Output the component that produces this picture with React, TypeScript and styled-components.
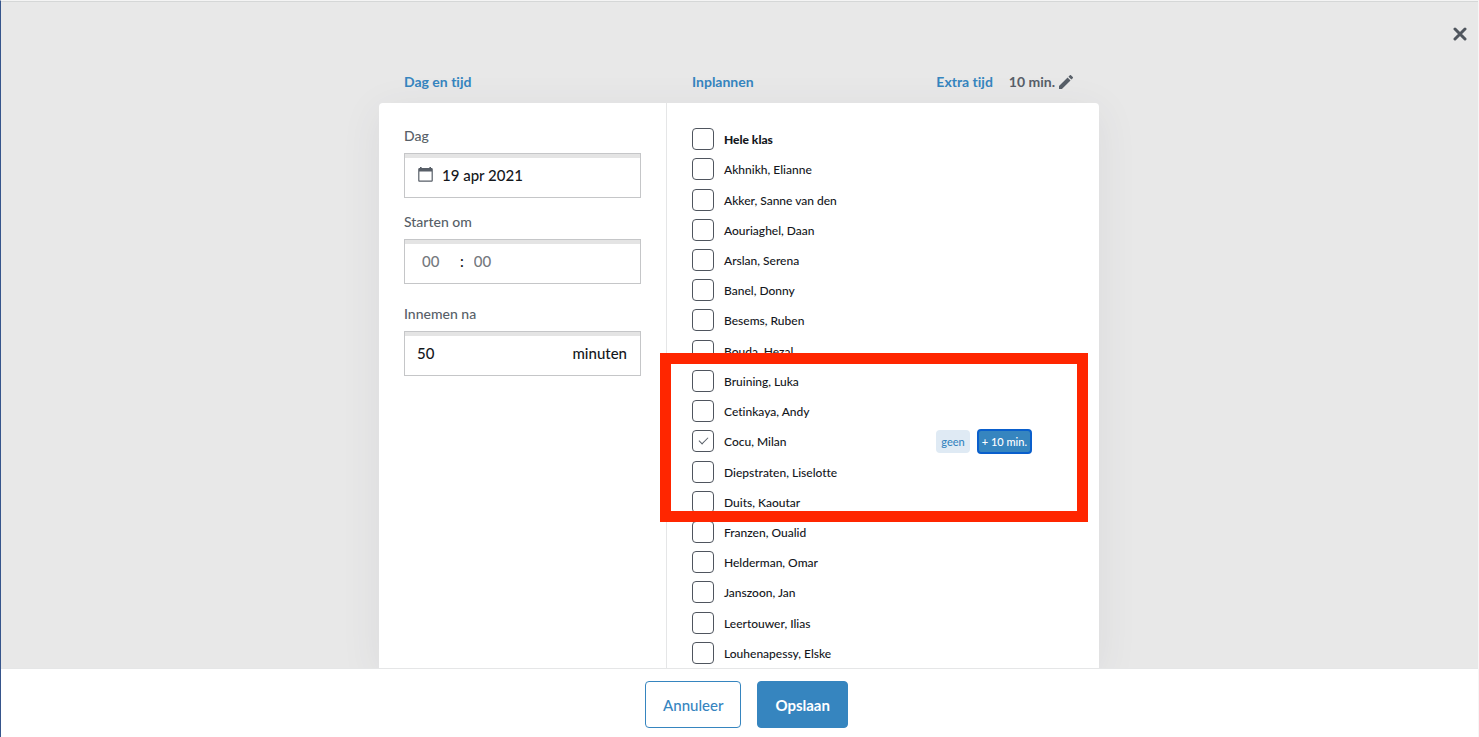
import React, { useState } from "react";
import styled, { createGlobalStyle, css } from "styled-components";

const color = {
  blue: "#3685bf",
  blueSoft: "#dfeaf4",
  focus: "#0a5fcc",
  text: "#14171c",
  label: "#585f68",
  border: "#c5c6c8",
  line: "#e5e6e7",
  backdrop: "#e8e8e8",
};

const GlobalStyle = createGlobalStyle`
  *, *::before, *::after { box-sizing: border-box; }
  body {
    margin: 0;
    font-family: Lato, "Liberation Sans", sans-serif;
    font-size: 14px;
    font-weight: 500;
    font-variant-ligatures: none;
    color: ${color.text};
    background: #fff;
  }
  input, button { font: inherit; color: inherit; font-variant-ligatures: none; }
`;

const Page = styled.div`
  display: flex;
  flex-direction: column;
  height: 100vh;
  min-height: 560px;
  border-left: 1px solid #36558c;
  border-right: 1px solid #f6f6f6;
  border-top: 1px solid #f4f4f4;
`;

const Stage = styled.main`
  position: relative;
  flex: 1;
  min-height: 0;
  display: flex;
  flex-direction: column;
  align-items: center;
  overflow: hidden;
  padding: 60px 17px 0 16px;
  background: ${color.backdrop};
  border-top: 1px solid #d5d7d7;
`;

const CloseButton = styled.button`
  position: absolute;
  top: 20px;
  right: 6px;
  display: grid;
  place-items: center;
  width: 24px;
  height: 24px;
  padding: 0;
  border: 0;
  background: none;
  color: #50565e;
  cursor: pointer;
`;

const columns = css`
  display: grid;
  grid-template-columns: minmax(0, 2fr) minmax(0, 3fr);
  width: 100%;
  max-width: 720px;
`;

const Headings = styled.header`
  ${columns}
  height: 41px;
  padding-bottom: 2px;
`;

const HeadingCell = styled.div`
  display: flex;
  align-items: center;
  padding: 0 26px 0 25px;
`;

const Heading = styled.h2<{ $grow?: boolean }>`
  margin: 0;
  flex: ${(p) => (p.$grow ? "1" : "none")};
  font-size: 14px;
  line-height: 20px;
  font-weight: 700;
  color: ${color.blue};
`;

const ExtraButton = styled.button`
  display: flex;
  align-items: center;
  gap: 4px;
  margin-left: 16px;
  padding: 0;
  border: 0;
  background: none;
  font-size: 14px;
  line-height: 20px;
  font-weight: 700;
  color: ${color.label};
  cursor: pointer;
`;

const Card = styled.section`
  ${columns}
  position: relative;
  flex: 1;
  min-height: 0;
  background: #fff;
  border-radius: 4px 4px 0 0;
  box-shadow: 0 8px 40px rgba(60, 60, 90, 0.08);
`;

const Fields = styled.div`
  display: flex;
  flex-direction: column;
  padding: 23px 25px;
  border-right: 1px solid ${color.line};
`;

const Field = styled.div<{ $roomy?: boolean }>`
  display: flex;
  flex-direction: column;
  gap: 7px;
  margin-bottom: ${(p) => (p.$roomy ? 20 : 14)}px;
`;

const Label = styled.label`
  font-size: 14px;
  line-height: 20px;
  color: ${color.label};
`;

const Control = styled.div`
  display: flex;
  align-items: center;
  height: 45px;
  padding: 0 13px 2px 12px;
  border: 1px solid ${color.border};
  box-shadow: inset 0 4px 0 #e4e4e4;
  font-size: 15px;
  line-height: 20px;
`;

const TextInput = styled.input<{ $width?: number }>`
  flex: ${(p) => (p.$width ? "none" : "1")};
  width: ${(p) => (p.$width ? `${p.$width}px` : "auto")};
  min-width: 0;
  padding: 0;
  border: 0;
  outline: 0;
  background: none;
  line-height: 20px;
  &::placeholder { color: #75797e; opacity: 1; }
`;

const CalendarIcon = styled.svg`
  flex: none;
  margin-right: 8px;
  color: ${color.label};
`;

const TimeRow = styled.div`
  display: flex;
  gap: 10px;
  padding-left: 5px;
`;

const Pupils = styled.ul`
  display: grid;
  grid-auto-rows: minmax(30px, 1fr);
  min-height: 0;
  margin: 0;
  padding: 21px 67px 0 25px;
  list-style: none;
`;

const Pupil = styled.li`
  display: flex;
  align-items: center;
  justify-content: space-between;
`;

const PupilLabel = styled.label<{ $strong?: boolean }>`
  display: flex;
  align-items: center;
  gap: 10px;
  font-size: 12px;
  line-height: 18px;
  font-weight: ${(p) => (p.$strong ? 900 : 500)};
  cursor: pointer;
`;

const PupilName = styled.span`
  padding-top: 2px;
`;

const Box = styled.input`
  appearance: none;
  display: grid;
  place-items: center;
  width: 22px;
  height: 22px;
  margin: 0;
  border: 1px solid #4f555e;
  border-radius: 4px;
  background: #fff;
  &:checked::after {
    content: "";
    width: 9px;
    height: 5px;
    margin-bottom: 4px;
    border: solid ${color.label};
    border-width: 0 0 1px 1px;
    transform: rotate(-45deg);
  }
`;

const Chips = styled.div`
  display: flex;
  align-items: center;
  gap: 7px;
`;

const Chip = styled.button<{ $active?: boolean }>`
  height: ${(p) => (p.$active ? 25 : 23)}px;
  padding: 1px ${(p) => (p.$active ? 3 : 5)}px 0;
  border: ${(p) => (p.$active ? `2px solid ${color.focus}` : "0")};
  border-radius: 4px;
  background: ${(p) => (p.$active ? color.blue : color.blueSoft)};
  color: ${(p) => (p.$active ? "#fff" : color.blue)};
  font-size: 11px;
  white-space: nowrap;
  cursor: pointer;
`;

const Highlight = styled.div`
  position: absolute;
  top: 250px;
  left: 281px;
  width: 428px;
  height: 169px;
  border: 11px solid #ff2600;
  pointer-events: none;
`;

const Footer = styled.footer`
  display: flex;
  justify-content: center;
  gap: 16px;
  padding: 12px 0 9px 14px;
  background: #fff;
  border-top: 1px solid ${color.line};
`;

const ActionButton = styled.button<{ $primary?: boolean }>`
  height: 47px;
  padding: 0 17px;
  border: 1px solid ${color.blue};
  border-radius: 4px;
  background: ${(p) => (p.$primary ? color.blue : "#fff")};
  color: ${(p) => (p.$primary ? "#fff" : color.blue)};
  font-size: 15px;
  font-weight: ${(p) => (p.$primary ? 700 : 500)};
  cursor: pointer;
`;

const pupils = [
  "Hele klas",
  "Akhnikh, Elianne",
  "Akker, Sanne van den",
  "Aouriaghel, Daan",
  "Arslan, Serena",
  "Banel, Donny",
  "Besems, Ruben",
  "Bouda, Hezal",
  "Bruining, Luka",
  "Cetinkaya, Andy",
  "Cocu, Milan",
  "Diepstraten, Liselotte",
  "Duits, Kaoutar",
  "Franzen, Oualid",
  "Helderman, Omar",
  "Janszoon, Jan",
  "Leertouwer, Ilias",
  "Louhenapessy, Elske",
];

export default function App() {
  const [selected, setSelected] = useState<string[]>(["Cocu, Milan"]);
  const toggle = (name: string) =>
    setSelected((now) =>
      now.includes(name) ? now.filter((n) => n !== name) : [...now, name]
    );

  return (
    <Page>
      <GlobalStyle />
      <Stage>
        <CloseButton aria-label="Sluiten">
          <svg width="14" height="14" viewBox="0 0 14 14" fill="none" stroke="currentColor" strokeWidth="3" strokeLinecap="round">
            <path d="M2 2l10 10M12 2L2 12" />
          </svg>
        </CloseButton>
        <Headings>
          <HeadingCell>
            <Heading>Dag en tijd</Heading>
          </HeadingCell>
          <HeadingCell>
            <Heading $grow>Inplannen</Heading>
            <Heading>Extra tijd</Heading>
            <ExtraButton>
              10 min.
              <svg width="14" height="14" viewBox="3 3 18 18" fill="currentColor" aria-hidden="true">
                <path d="M3 17.25V21h3.75L17.81 9.94l-3.75-3.75L3 17.25zM20.71 7.04a1 1 0 0 0 0-1.41l-2.34-2.34a1 1 0 0 0-1.41 0l-1.83 1.83 3.75 3.75 1.83-1.83z" />
              </svg>
            </ExtraButton>
          </HeadingCell>
        </Headings>
        <Card>
          <Fields>
            <Field>
              <Label htmlFor="day">Dag</Label>
              <Control>
                <CalendarIcon width="17" height="17" viewBox="0 0 17 17" aria-hidden="true">
                  <path
                    fill="currentColor"
                    fillRule="evenodd"
                    d="M3 1h1.6v1h7.8V1H14v1h.5c.8 0 1.3.6 1.3 1.300v11.200c0 .8-.6 1.300-1.300 1.300h-12c-.8 0-1.300-.6-1.300-1.300V3.300C1.200 2.600 1.700 2 2.500 2H3zM2.400 5.600v9h12.200v-9z"
                  />
                </CalendarIcon>
                <TextInput id="day" defaultValue="19 apr 2021" />
              </Control>
            </Field>
            <Field $roomy>
              <Label htmlFor="hour">Starten om</Label>
              <Control>
                <TimeRow>
                  <TextInput id="hour" $width={28} placeholder="00" />
                  <span>:</span>
                  <TextInput $width={28} placeholder="00" aria-label="Minuten" />
                </TimeRow>
              </Control>
            </Field>
            <Field>
              <Label htmlFor="duration">Innemen na</Label>
              <Control>
                <TextInput id="duration" defaultValue="50" />
                <span>minuten</span>
              </Control>
            </Field>
          </Fields>
          <Pupils>
            {pupils.map((name, i) => (
              <Pupil key={name}>
                <PupilLabel $strong={i === 0}>
                  <Box
                    type="checkbox"
                    checked={selected.includes(name)}
                    onChange={() => toggle(name)}
                  />
                  <PupilName>{name}</PupilName>
                </PupilLabel>
                {selected.includes(name) && (
                  <Chips>
                    <Chip>geen</Chip>
                    <Chip $active>+ 10 min.</Chip>
                  </Chips>
                )}
              </Pupil>
            ))}
          </Pupils>
          <Highlight />
        </Card>
      </Stage>
      <Footer>
        <ActionButton>Annuleer</ActionButton>
        <ActionButton $primary>Opslaan</ActionButton>
      </Footer>
    </Page>
  );
}
